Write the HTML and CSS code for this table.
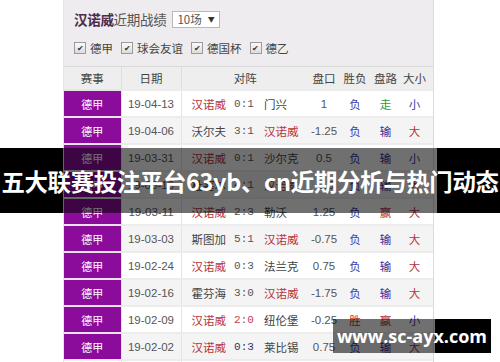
FILE: index.html
```html
<!DOCTYPE html>
<html lang="zh">
<head>
<meta charset="utf-8">
<title>汉诺威近期战绩</title>
<link rel="stylesheet" href="styles.css">
</head>
<body>
<div class="panel">
  <div class="head">
    <div class="title-row">
      <span class="title"><b>汉诺威</b>近期战绩</span>
      <span class="select">10场 <i class="arrow">▼</i></span>
    </div>
    <div class="filters">
      <label class="chk"><span class="box">✔</span>德甲</label>
      <label class="chk"><span class="box">✔</span>球会友谊</label>
      <label class="chk"><span class="box">✔</span>德国杯</label>
      <label class="chk"><span class="box">✔</span>德乙</label>
    </div>
  </div>
  <table class="grid">
    <colgroup>
      <col class="c-lg"><col class="c-dt"><col class="c-h"><col class="c-sc"><col class="c-a"><col class="c-pk"><col class="c-wl"><col class="c-pl"><col class="c-ou">
    </colgroup>
    <thead>
      <tr><th class="sep">赛事</th><th class="sep">日期</th><th colspan="3">对阵</th><th>盘口</th><th>胜负</th><th>盘路</th><th class="last">大小</th></tr>
    </thead>
    <tbody>
      <tr><td class="lg">德甲</td><td class="dt">19-04-13</td><td class="home red">汉诺威</td><td class="sc">0:1</td><td class="away">门兴</td><td class="pk">1</td><td class="blue">负</td><td class="green">走</td><td class="blue last">小</td></tr>
      <tr class="alt"><td class="lg">德甲</td><td class="dt">19-04-06</td><td class="home">沃尔夫</td><td class="sc">3:1</td><td class="away red">汉诺威</td><td class="pk">-1.25</td><td class="blue">负</td><td class="navy">输</td><td class="red last">大</td></tr>
      <tr><td class="lg">德甲</td><td class="dt">19-03-31</td><td class="home red">汉诺威</td><td class="sc">0:1</td><td class="away">沙尔克</td><td class="pk">0.5</td><td class="blue">负</td><td class="navy">输</td><td class="blue last">小</td></tr>
      <tr class="alt"><td class="lg">德甲</td><td class="dt">19-03-16</td><td class="home">杜塞尔</td><td class="sc">4:1</td><td class="away red">汉诺威</td><td class="pk">-0.5</td><td class="blue">负</td><td class="navy">输</td><td class="red last">大</td></tr>
      <tr><td class="lg">德甲</td><td class="dt">19-03-11</td><td class="home red">汉诺威</td><td class="sc">2:3</td><td class="away">勒沃</td><td class="pk">1.25</td><td class="blue">负</td><td class="red">赢</td><td class="red last">大</td></tr>
      <tr class="alt"><td class="lg">德甲</td><td class="dt">19-03-03</td><td class="home">斯图加</td><td class="sc">5:1</td><td class="away red">汉诺威</td><td class="pk">-0.75</td><td class="blue">负</td><td class="navy">输</td><td class="red last">大</td></tr>
      <tr><td class="lg">德甲</td><td class="dt">19-02-24</td><td class="home red">汉诺威</td><td class="sc">0:3</td><td class="away">法兰克</td><td class="pk">0.75</td><td class="blue">负</td><td class="navy">输</td><td class="red last">大</td></tr>
      <tr class="alt"><td class="lg">德甲</td><td class="dt">19-02-16</td><td class="home">霍芬海</td><td class="sc">3:0</td><td class="away red">汉诺威</td><td class="pk">-1.75</td><td class="blue">负</td><td class="navy">输</td><td class="red last">大</td></tr>
      <tr><td class="lg">德甲</td><td class="dt">19-02-09</td><td class="home red">汉诺威</td><td class="sc win">2:0</td><td class="away">纽伦堡</td><td class="pk">-0.25</td><td class="red">胜</td><td class="red">赢</td><td class="blue last">小</td></tr>
      <tr class="alt"><td class="lg">德甲</td><td class="dt">19-02-02</td><td class="home red">汉诺威</td><td class="sc loss">0:3</td><td class="away">莱比锡</td><td class="pk">0.75</td><td class="blue">负</td><td class="navy">输</td><td class="red last">大</td></tr>
      <tr class="tail"><td></td><td></td><td></td><td></td><td></td><td></td><td></td><td></td><td></td></tr>
    </tbody>
  </table>
</div>
<div class="banner"><span>五大联赛投注平台63yb、cn近期分析与热门动态</span></div>
<div class="mark">www.sc-ayx.com</div>
</body>
</html>
```

FILE: styles.css
```css
html, body {
  margin: 0;
  padding: 0;
  height: 362px;
  overflow: hidden;
  background: #ffffff;
}
body {
  position: relative;
  font-family: "Liberation Sans", "Noto Sans CJK SC", sans-serif;
  color: #444;
}
.panel {
  width: 369px;
  margin-left: 63px;
  border-right: 1px solid #dcdcdc;
  border-left: 1px solid #e4e4e4;
  box-sizing: content-box;
}
.head {
  height: 67px;
  box-sizing: border-box;
  background: #eeecee;
  padding: 10px 0 0 10px;
  border-bottom: 1px solid #dadada;
}
.title-row {
  display: flex;
  align-items: center;
  height: 18px;
}
.title {
  font-family: "Noto Sans CJK SC", sans-serif;
  font-size: 13.5px;
  color: #555;
  letter-spacing: -0.3px;
  line-height: 18px;
}
.title b {
  color: #4f2a48;
  font-weight: 700;
}
.select {
  margin-left: 6px;
  display: inline-flex;
  align-items: center;
  height: 17px;
  width: 48px;
  box-sizing: border-box;
  padding-left: 4px;
  background: #fff;
  border: 1px solid #b9b9b9;
  font-family: "Noto Sans CJK SC", sans-serif;
  font-size: 11.5px;
  color: #555;
}
.arrow {
  font-style: normal;
  font-size: 7px;
  margin-left: 6px;
  color: #333;
}
.filters {
  display: flex;
  align-items: center;
  margin-top: 12px;
  gap: 8px;
}
.chk {
  display: inline-flex;
  align-items: center;
  font-family: "Noto Sans CJK SC", sans-serif;
  font-size: 11.5px;
  color: #444;
}
.box {
  display: inline-flex;
  align-items: center;
  justify-content: center;
  width: 10px;
  height: 10px;
  margin-right: 4px;
  border: 1px solid #9a9a9a;
  background: linear-gradient(#fafafa, #dcdcdc);
  font-size: 8px;
  color: #333;
  line-height: 1;
}
.grid {
  width: 369px;
  border-collapse: collapse;
  table-layout: fixed;
  font-family: "Noto Sans CJK SC", sans-serif;
  font-size: 11.5px;
}
.c-lg { width: 57px; }
.c-dt { width: 60px; }
.c-h { width: 48px; }
.c-sc { width: 30px; }
.c-a { width: 50px; }
.c-pk { width: 30px; }
.c-wl { width: 32px; }
.c-pl { width: 29px; }
.c-ou { width: 33px; }
.grid th {
  height: 22px;
  padding: 0;
  background: #eeeeee;
  font-weight: 400;
  color: #444;
  text-align: center;
  border-bottom: 1px solid #dedede;
}
.grid th.sep {
  border-right: 1px solid #dedede;
}
.grid td {
  height: 25px;
  padding: 0;
  text-align: center;
  border-top: 2px solid #ececec;
  background: #ffffff;
  white-space: nowrap;
}
.grid tr.alt td {
  background: #f5f4f5;
}
.grid td.lg,
.grid tr.alt td.lg {
  background: #8b0b9b;
  color: #fff;
  font-size: 11px;
  border-top: 2px solid #e9e3ea;
  border-right: 1px solid #e6e6e6;
}
.grid td.dt {
  font-family: "Liberation Sans", sans-serif;
  font-size: 11.5px;
  color: #555;
  border-right: 1px solid #e4e4e4;
}
.grid tr.tail td:first-child {
  border-right: 1px solid #e6e6e6;
}
.grid tr.tail td:nth-child(2) {
  border-right: 1px solid #e4e4e4;
}
.grid td.home {
  text-align: left;
  padding-left: 10px;
  color: #444;
}
.grid td.away {
  text-align: left;
  padding-left: 5px;
  color: #444;
}
.grid td.sc {
  font-family: "Liberation Mono", monospace;
  font-size: 11px;
  color: #555;
}
.grid td.sc.win { color: #c0404a; }
.grid td.sc.loss { color: #2c3170; }
.grid td.pk {
  font-family: "Liberation Sans", sans-serif;
  font-size: 11.5px;
  color: #555;
}
.grid .last { padding-right: 4px; }
.grid td.red { color: #b8333a; }
.grid td.blue { color: #3a3fb0; }
.grid td.navy { color: #2a2f9a; }
.grid td.green { color: #2a9a34; }
.grid th.last { padding-right: 4px; }

.banner {
  position: absolute;
  left: 0;
  top: 148px;
  width: 500px;
  height: 65px;
  display: flex;
  align-items: center;
  justify-content: center;
  background: linear-gradient(to right, #000 0, #000 63px, rgba(0,0,0,0.56) 63px, rgba(0,0,0,0.56) 437px, #000 437px, #000 500px);
  color: #fff;
  font-family: "Noto Sans CJK SC", sans-serif;
  font-weight: 700;
  font-size: 23.4px;
  white-space: nowrap;
  letter-spacing: -0.3px;
}
.mark {
  position: absolute;
  left: 333px;
  top: 319px;
  width: 158px;
  height: 34px;
  display: flex;
  align-items: center;
  justify-content: center;
  background: linear-gradient(to right, rgba(0,0,0,0.56) 0, rgba(0,0,0,0.56) 102px, #000 102px, #000 158px);
  color: #fff;
  font-family: "Open Sans", sans-serif;
  font-weight: 700;
  font-size: 18px;
}
```
